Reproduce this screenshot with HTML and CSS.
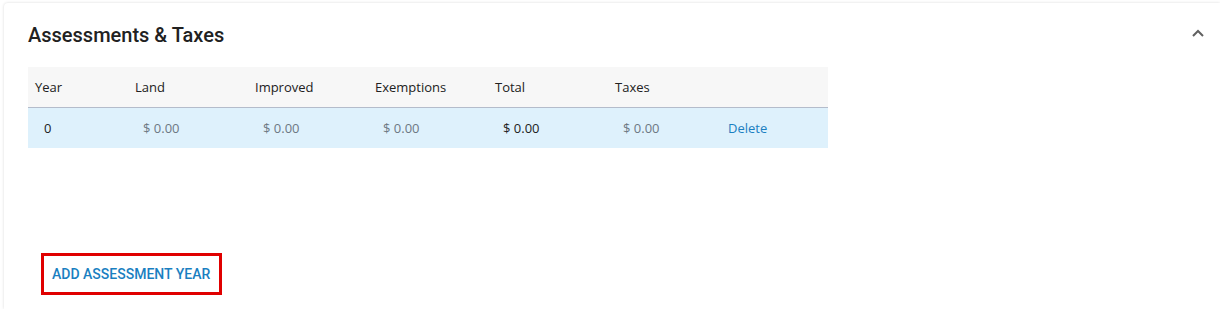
FILE: index.html
```html
<!DOCTYPE html>
<html lang="en">
<head>
	<meta charset="UTF-8">
	<meta name="viewport" content="width=device-width, initial-scale=1.0">
	<title>Assessments &amp; Taxes</title>
	<link rel="stylesheet" href="styles.css">
</head>
<body>
<div class="panel">
	<!-- panel header -->
	<div class="panel-header">
		<h2 class="panel-title">Assessments &amp; Taxes</h2>
		<svg class="chevron" width="14" height="10" viewBox="0 0 14 10">
			<path d="M2 8 L7 3 L12 8" fill="none" stroke="#616161" stroke-width="2"/>
		</svg>
	</div>

	<!-- assessment table -->
	<table class="assess-table">
		<colgroup>
			<col class="col-narrow">
			<col class="col-wide">
			<col class="col-wide">
			<col class="col-wide">
			<col class="col-wide">
			<col class="col-wide">
			<col class="col-narrow">
		</colgroup>
		<thead>
			<tr>
				<th>Year</th>
				<th>Land</th>
				<th>Improved</th>
				<th>Exemptions</th>
				<th>Total</th>
				<th>Taxes</th>
				<th></th>
			</tr>
		</thead>
		<tbody>
			<tr>
				<td class="first">0</td>
				<td class="muted">$ 0.00</td>
				<td class="muted">$ 0.00</td>
				<td class="muted">$ 0.00</td>
				<td>$ 0.00</td>
				<td class="muted">$ 0.00</td>
				<td class="action"><a href="#">Delete</a></td>
			</tr>
		</tbody>
	</table>

	<div class="panel-actions">
		<button class="add-button">Add Assessment Year</button>
	</div>
</div>
</body>
</html>
```

FILE: styles.css
```css
body {
	margin: 0;
	background-color: #ffffff;
	font-family: Roboto, Arial, sans-serif;
	color: #212121;
}
.panel {
	box-sizing: border-box;
	margin: 3px 0 0 4px;
	padding: 0 24px;
	height: 306px;
	background-color: #fff;
	border-radius: 4px 0 0 0;
	box-shadow: 0 0 3px rgba(0, 0, 0, 0.15);
}
.panel-header {
	display: flex;
	align-items: center;
	justify-content: space-between;
	height: 64px;
}
.panel-title {
	margin: 0;
	font-size: 20px;
	font-weight: 500;
	color: #212121;
}
.chevron {
	margin-right: -9px;
	margin-top: -4px;
}
.assess-table {
	border-collapse: collapse;
	table-layout: fixed;
	width: 800px;
	font-family: "Open Sans", Arial, sans-serif;
	font-size: 13px;
}
.col-narrow {
	width: 100px;
}
.col-wide {
	width: 120px;
}
.assess-table th {
	height: 40px;
	padding: 0 7px;
	text-align: left;
	font-weight: 400;
	color: #212121;
	background-color: #f7f7f7;
	border-bottom: 1px solid #b4bccb;
}
.assess-table td {
	height: 40px;
	padding: 0 15px;
	background-color: #def1fc;
	color: #212121;
}
.assess-table td.first {
	padding-left: 16px;
}
.assess-table td.muted {
	color: #6d7883;
}
.assess-table td.action {
	padding-left: 0;
}
.assess-table a {
	color: #1a7fc1;
	text-decoration: none;
}
.panel-actions {
	margin-top: 105px;
	margin-left: 13px;
}
.add-button {
	padding: 0 9px 0 8px;
	height: 42px;
	border: 3px solid #e00000;
	background: #fff;
	color: #1a7fc1;
	font-family: Roboto, Arial, sans-serif;
	font-size: 14px;
	font-weight: 500;
	text-transform: uppercase;
	cursor: pointer;
}
```
